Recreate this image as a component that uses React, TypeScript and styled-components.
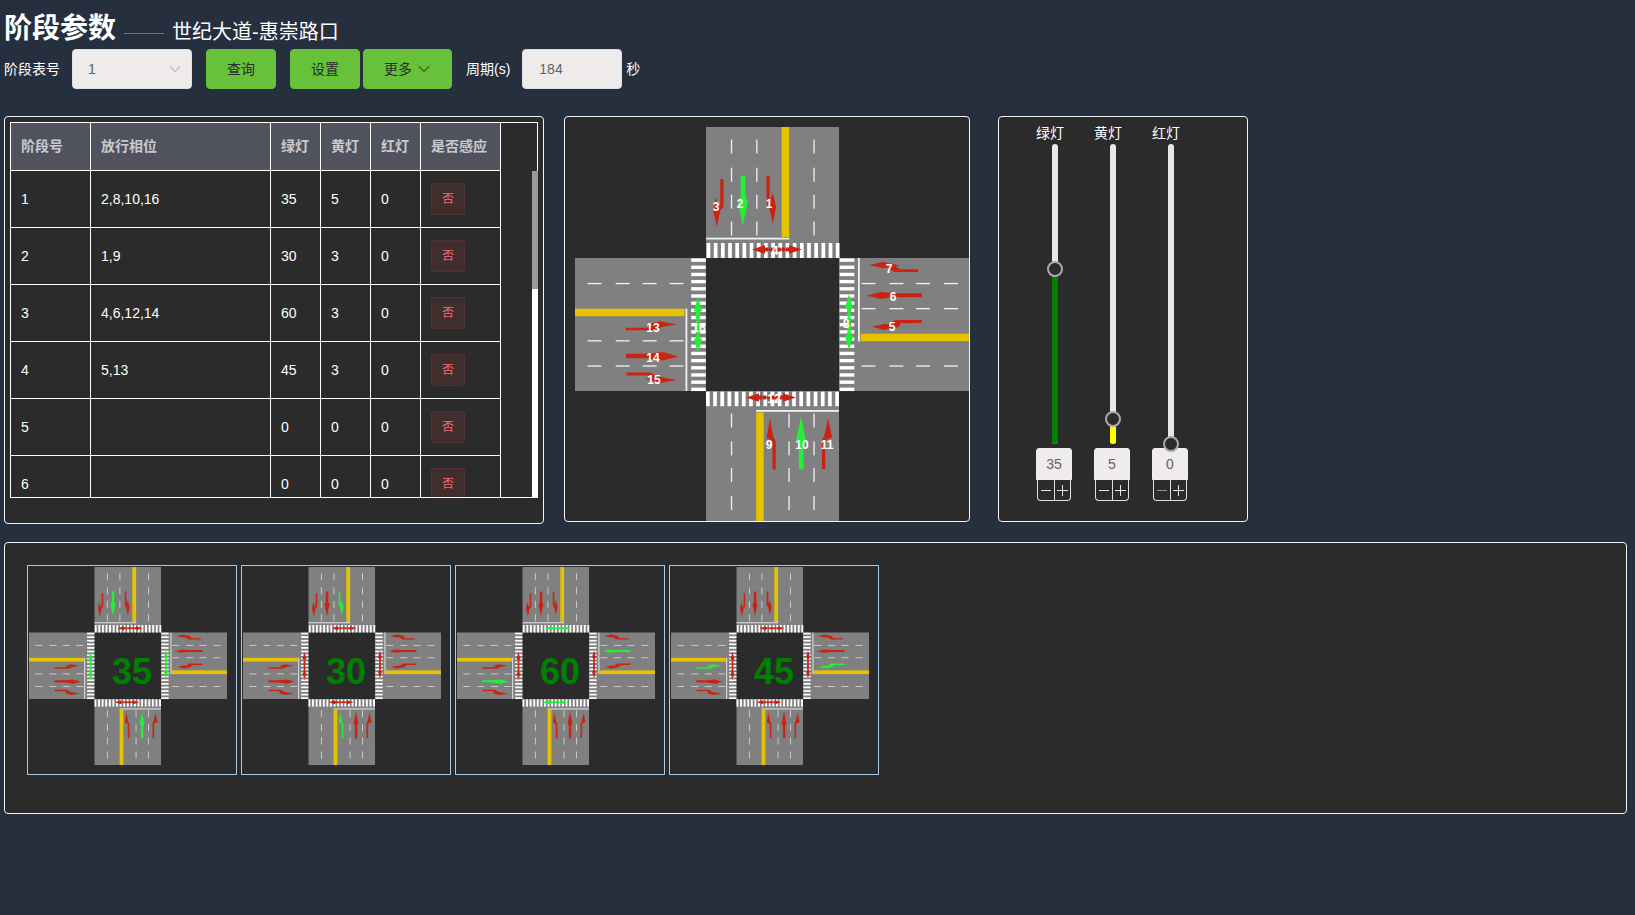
import React, { useState } from "react";
import styled, { createGlobalStyle } from "styled-components";

const GlobalStyle = createGlobalStyle`
  * { box-sizing: border-box; }
  body {
    margin: 0;
    background: #262f3e;
    color: #fff;
    font-family: "Liberation Sans", "Noto Sans CJK SC", sans-serif;
    font-size: 14px;
    line-height: 20px;
  }
  button, input, select { font: inherit; margin: 0; }
`;

const Page = styled.main`
  min-height: 100vh;
  padding: 0 8px 0 4px;
`;

const Header = styled.header`
  display: flex;
  align-items: center;
  height: 49px;
  padding-top: 8px;
`;

const Title = styled.h1`
  margin: 0;
  font-size: 28px;
  line-height: 40px;
  font-weight: 700;
`;

const Dash = styled.span`
  width: 40px;
  margin: 10px 8px 0;
  border-top: 1px solid #6d7480;
`;

const Subtitle = styled.h2`
  margin: 6px 0 0;
  font-size: 20px;
  line-height: 28px;
  font-weight: 400;
`;

const Toolbar = styled.form`
  display: flex;
  align-items: center;
  height: 40px;
  margin-bottom: 27px;
`;

const FieldLabel = styled.label<{ $before?: number }>`
  margin-left: ${(p) => p.$before ?? 0}px;
  margin-right: 12px;
`;

const SelectBox = styled.span`
  display: grid;
  width: 120px;
  align-items: center;
  margin-right: 14px;
  > * { grid-area: 1 / 1; }
  > svg { justify-self: end; margin-right: 10px; pointer-events: none; }
`;

const Select = styled.select`
  appearance: none;
  width: 100%;
  height: 40px;
  padding: 0 30px 0 15px;
  border: 1px solid #dcdfe6;
  border-radius: 4px;
  background: #efebeb;
  color: #606266;
`;

const CycleInput = styled.input`
  width: 100px;
  height: 40px;
  padding: 0 16px;
  border: 1px solid #dcdfe6;
  border-radius: 4px;
  background: #efebeb;
  color: #606266;
`;

const Unit = styled.span`
  margin-left: 4px;
`;

const GreenButton = styled.button<{ $after?: number }>`
  display: inline-flex;
  align-items: center;
  gap: 5px;
  height: 40px;
  margin-right: ${(p) => p.$after ?? 0}px;
  padding: 0 20px;
  border: 1px solid #67c23a;
  border-radius: 4px;
  background: #67c23a;
  color: #2b2b2b;
  cursor: pointer;
`;

const Panels = styled.div`
  display: flex;
  flex-wrap: wrap;
  align-items: flex-start;
  margin-bottom: 18px;
`;

const Panel = styled.section`
  border: 1px solid #f2f4f8;
  border-radius: 4px;
  background: #2b2b2b;
`;

const TablePanel = styled(Panel)`
  width: 540px;
  margin-right: 20px;
  padding: 5px 5px 25px;
`;

const CrossPanel = styled(Panel)`
  width: 406px;
  margin-right: 28px;
  > svg { display: block; width: 100%; border-radius: 3px; }
`;

const SliderPanel = styled(Panel)`
  display: flex;
  gap: 22px;
  width: 250px;
  height: 406px;
  padding: 6px 0 0 37px;
`;

const TableFrame = styled.div`
  position: relative;
`;

const TableScroller = styled.div`
  height: 376px;
  overflow-x: hidden;
  overflow-y: auto;
  scrollbar-width: none;
  border: 1px solid #fff;
`;

const ScrollTrack = styled.div`
  position: absolute;
  top: 49px;
  right: 0;
  bottom: 0;
  width: 6px;
  background: #fff;
`;

const ScrollThumb = styled.div`
  height: 36%;
  background: #9a9a9a;
`;

const Table = styled.table`
  width: 490px;
  table-layout: fixed;
  border-collapse: separate;
  border-spacing: 0;
`;

const Th = styled.th<{ $width: number }>`
  position: sticky;
  top: 0;
  z-index: 1;
  width: ${(p) => p.$width}px;
  height: 48px;
  padding: 0 10px 2px;
  border-right: 1px solid #fff;
  border-bottom: 1px solid #fff;
  background: #50525e;
  color: #c8cacf;
  text-align: left;
  white-space: nowrap;
`;

const Td = styled.td`
  height: 57px;
  padding: 0 10px;
  border-right: 1px solid #fff;
  border-bottom: 1px solid #fff;
`;

const Tag = styled.span`
  display: block;
  width: 34px;
  height: 32px;
  border: 1px solid #4e3233;
  border-radius: 2px;
  background: #402e2f;
  color: #f56c6c;
  font-size: 12px;
  line-height: 30px;
  text-align: center;
`;

const Column = styled.div`
  display: flex;
  flex-direction: column;
  align-items: flex-start;
  width: 36px;
`;

const ColumnLabel = styled.label`
  white-space: nowrap;
  margin-bottom: 1px;
`;

const SliderStack = styled.div`
  display: grid;
  place-items: center;
  width: 38px;
  height: 300px;
  margin-bottom: 4px;
  > * { grid-area: 1 / 1; }
`;

const Track = styled.span`
  display: flex;
  align-items: flex-end;
  width: 6px;
  height: 300px;
  border-radius: 3px;
  overflow: hidden;
  background: #e9e6ee;
`;

const Fill = styled.span<{ $color: string }>`
  width: 100%;
  background: ${(p) => p.$color};
`;

const Range = styled.input`
  appearance: none;
  z-index: 1;
  writing-mode: vertical-lr;
  direction: rtl;
  width: 16px;
  height: 316px;
  margin: -8px 0;
  background: transparent;
  &::-webkit-slider-thumb {
    appearance: none;
    width: 16px;
    height: 16px;
    border: 2px solid #a8a8ae;
    border-radius: 50%;
    background: #2b2b2b;
  }
`;

const SmallInput = styled.input`
  width: 36px;
  height: 32px;
  padding: 0;
  border: 1px solid #f2eff0;
  border-radius: 3px 3px 0 0;
  background: #f0ebec;
  color: #606266;
  text-align: center;
`;

const Steppers = styled.div`
  display: flex;
  width: 34px;
  height: 21px;
  margin-left: 1px;
  border: 1px solid #dcdfe6;
  border-top: 0;
  border-radius: 0 0 4px 4px;
`;

const StepButton = styled.button`
  display: flex;
  flex: 1;
  align-items: center;
  justify-content: center;
  padding: 0;
  border: 0;
  background: transparent;
  color: #e4e7ed;
  & + & { border-left: 1px solid #dcdfe6; }
  &:disabled { color: #8d8f94; }
`;

const PhasePanel = styled(Panel)`
  display: flex;
  flex-wrap: wrap;
  align-items: flex-start;
  gap: 4px;
  min-height: 272px;
  padding: 22px;
`;

const Thumb = styled.figure`
  width: 210px;
  height: 210px;
  margin: 0;
  border: 1px solid #a9c9e8;
  > svg { display: block; width: 100%; }
`;

const ChevronDown = ({ color }: { color: string }) => (
  <svg width="14" height="14" viewBox="0 0 14 14" fill="none" stroke={color} strokeWidth="1.1">
    <path d="M2 4.5 L7 9.5 L12 4.5" />
  </svg>
);

const RED = "#cb2212";
const GREEN = "#22f034";

const arrowPaths: Record<number, string> = {
  1: "M191.5 49h3.2v25l3-8 3.4 14-3.4 17-3-14.5-3.2-6.5z",
  2: "M165.7 49h4.8v21l2.5 5-5.3 23.5-4.6-23.5 2.6-5z",
  3: "M145.3 52h3.2v28l-3.2 3.2-3.4 16.5-3.9-16.5 2.6-13 3.2 9.8 1.5-1.5z",
  5: "M346.7 193v3l-21 .3-2 3.7-15 3-12-3.3 13-2.7 4.5 .5 5-4.2 5.5-.3z",
  6: "M291.7 168.7l14-3.8 13 1.3h28.3v4h-28.3l-13 1.5z",
  7: "M343.3 142.3v2.8h-24l-7-4.4-4.5 .5-13.5-3.2 13.7-3 17 3.4-4.5 1.1 5 2.8z",
  9: "M200.7 342.5h-3.2v-28.5l-6-3.3 3.6-19.5 3 18 2.6 5z",
  10: "M228.6 342.5h-4.8v-25l-2.7-4 5-24.5 4.8 24.5-2.3 4z",
  11: "M247 342h3.2v-28.5l6.8-3.3-3.8-19-3.4 15.5-2.8 7z",
  13: "M50.8 200.7h22l6-3-10 .6 16-4 16.9 3.1-15 2.6-7 3.3h-28.9z",
  14: "M50.8 226.7h21l16-1.7 15.5 4.4-15.5 4-16-2.2h-21z",
  15: "M51.5 245.5h24l8 4.3 18.2 3.2-16.7 3-15-4 6-1-4-2.5h-20.5z",
};

const labels: [number, number, number][] = [
  [3, 141, 84], [2, 165, 81], [1, 194, 81], [4, 200, 128],
  [7, 314, 146], [6, 318, 174], [5, 317, 204], [8, 271, 201],
  [13, 78, 205], [14, 78, 235], [15, 79, 257], [16, 124, 205],
  [9, 194, 322], [10, 227, 322], [11, 252, 322], [12, 199, 276],
];

// centre of each pedestrian crossing signal; the arrow is 50 long
const walks: { id: number; x: number; y: number; vertical?: boolean }[] = [
  { id: 4, x: 202, y: 122.5 },
  { id: 12, x: 196, y: 270.5 },
  { id: 16, x: 123, y: 198, vertical: true },
  { id: 8, x: 274, y: 195, vertical: true },
];

const dashA = [12.5, 40.7, 67.7, 94.5];
const dashB = [286.5, 314.4, 341, 369];
const stripes = Array.from({ length: 19 }, (_, i) => 131.6 + i * 7.18);

const VDashes = ({ xs, ys }: { xs: number[]; ys: number[] }) => (
  <>{xs.flatMap((x) => ys.map((y) => <rect key={`${x}-${y}`} x={x - 0.6} y={y} width={1.3} height={14} />))}</>
);
const HDashes = ({ xs, ys }: { xs: number[]; ys: number[] }) => (
  <>{ys.flatMap((y) => xs.map((x) => <rect key={`${x}-${y}`} x={x} y={y - 0.6} width={14} height={1.3} />))}</>
);

interface CrossProps {
  green: number[];
  viewBox: string;
  numbered?: boolean;
  seconds?: number;
}

function Crossroad({ green, viewBox, numbered, seconds }: CrossProps) {
  const tone = (id: number) => (green.includes(id) ? GREEN : RED);
  return (
    <svg viewBox={viewBox} role="img" aria-label="路口">
      <g fill="#808080">
        <rect x="131" y="0" width="133" height="131" />
        <rect x="131" y="264" width="133" height="132" />
        <rect x="0" y="131" width="131" height="133" />
        <rect x="264" y="131" width="132" height="133" />
      </g>
      <g fill="#e6c300">
        <rect x="206.7" y="0" width="7.5" height="110" />
        <rect x="0" y="181.7" width="109.5" height="7.5" />
        <rect x="285.7" y="206.7" width="110.3" height="7.5" />
        <rect x="181.2" y="285.5" width="7.5" height="110.5" />
      </g>
      <g fill="#f0f0f0">
        <VDashes xs={[156.5, 181.8, 239]} ys={dashA} />
        <VDashes xs={[156.5, 214, 239]} ys={dashB} />
        <HDashes xs={dashA} ys={[156.5, 213.8, 239]} />
        <HDashes xs={dashB} ys={[156.5, 181.6, 239]} />
        <rect x="131" y="110.7" width="83.3" height="1.8" />
        <rect x="110.5" y="181.5" width="1.8" height="82.5" />
        <rect x="283" y="131" width="1.8" height="83.6" />
        <rect x="181" y="283" width="83" height="1.8" />
      </g>
      <g fill="#fff">
        {stripes.map((s) => (
          <React.Fragment key={s}>
            <rect x={s} y="116" width="3.7" height="15" />
            <rect x={s - 0.6} y="264.7" width="3.7" height="14.5" />
            <rect x="116.2" y={s - 0.2} width="14.6" height="3.4" />
            <rect x="264.7" y={s - 0.2} width="14.6" height="3.4" />
          </React.Fragment>
        ))}
      </g>
      {walks.map((w) => (
        <g key={w.id} fill={tone(w.id)} transform={`translate(${w.x} ${w.y})${w.vertical ? " scale(1 1.12) rotate(90)" : ""}`}>
          <path d="M-25 0 L-12 -4.2 V-2 H-9 V2 H-12 V4.2z M25 0 L12 -4.2 V-2 H9 V2 H12 V4.2z" />
          <path d="M-8 -2h3.2v4h-3.2z M-3.8 -2h3.2v4h-3.2z M.6 -2h3.2v4H.6z M4.8 -2h3.2v4H4.8z" />
          <path d="M-12 -.8H12V.8H-12z" />
        </g>
      ))}
      {Object.entries(arrowPaths).map(([id, d]) => (
        <path key={id} d={d} fill={tone(Number(id))} />
      ))}
      {numbered && (
        <g fill="#fff" fontSize="12" fontWeight="700" textAnchor="middle">
          {labels.map(([id, x, y]) => (
            <text key={id} x={x} y={y}>{id}</text>
          ))}
        </g>
      )}
      {seconds !== undefined && (
        <text x="166" y="234" fontSize="72" fontWeight="700" fill="#008000">{seconds}</text>
      )}
    </svg>
  );
}

const columns: [string, number][] = [
  ["阶段号", 80], ["放行相位", 180], ["绿灯", 50], ["黄灯", 50], ["红灯", 50], ["是否感应", 80],
];

const stages = [
  { id: 1, phases: [2, 8, 10, 16], green: 35, yellow: 5, red: 0 },
  { id: 2, phases: [1, 9], green: 30, yellow: 3, red: 0 },
  { id: 3, phases: [4, 6, 12, 14], green: 60, yellow: 3, red: 0 },
  { id: 4, phases: [5, 13], green: 45, yellow: 3, red: 0 },
  { id: 5, phases: [], green: 0, yellow: 0, red: 0 },
  { id: 6, phases: [], green: 0, yellow: 0, red: 0 },
];

function LampSlider({ id, label, color, initial }: { id: string; label: string; color: string; initial: number }) {
  const [value, setValue] = useState(initial);
  const clamp = (n: number) => setValue(Math.max(0, Math.min(60, n || 0)));
  return (
    <Column>
      <ColumnLabel htmlFor={id}>{label}</ColumnLabel>
      <SliderStack>
        <Track>
          <Fill $color={color} style={{ height: `${(value / 60) * 100}%` }} />
        </Track>
        <Range id={id} type="range" min={0} max={60} value={value} onChange={(e) => clamp(Number(e.target.value))} />
      </SliderStack>
      <SmallInput aria-label={`${label}秒数`} value={value} onChange={(e) => clamp(Number(e.target.value))} />
      <Steppers>
        <StepButton type="button" aria-label={`${label}减少`} disabled={value === 0} onClick={() => clamp(value - 1)}>
          <svg width="12" height="12" viewBox="0 0 12 12" stroke="currentColor"><path d="M1 6.5H11" /></svg>
        </StepButton>
        <StepButton type="button" aria-label={`${label}增加`} onClick={() => clamp(value + 1)}>
          <svg width="12" height="12" viewBox="0 0 12 12" stroke="currentColor"><path d="M1 6.5H12M6.5 1V12" /></svg>
        </StepButton>
      </Steppers>
    </Column>
  );
}

export default function App() {
  return (
    <Page>
      <GlobalStyle />
      <Header>
        <Title>阶段参数</Title>
        <Dash />
        <Subtitle>世纪大道-惠崇路口</Subtitle>
      </Header>
      <Toolbar onSubmit={(e) => e.preventDefault()}>
        <FieldLabel htmlFor="stage-table">阶段表号</FieldLabel>
        <SelectBox>
          <Select id="stage-table" defaultValue="1">
            <option>1</option>
            <option>2</option>
            <option>3</option>
          </Select>
          <ChevronDown color="#b8bcc6" />
        </SelectBox>
        <GreenButton type="submit" $after={14}>查询</GreenButton>
        <GreenButton type="button" $after={3}>设置</GreenButton>
        <GreenButton type="button">
          更多
          <ChevronDown color="#35581f" />
        </GreenButton>
        <FieldLabel htmlFor="cycle" $before={14}>周期(s)</FieldLabel>
        <CycleInput id="cycle" defaultValue="184" />
        <Unit>秒</Unit>
      </Toolbar>

      <Panels>
        <TablePanel>
          <TableFrame>
            <TableScroller>
              <Table>
                <thead>
                  <tr>
                    {columns.map(([name, width]) => (
                      <Th key={name} $width={width} scope="col">{name}</Th>
                    ))}
                  </tr>
                </thead>
                <tbody>
                  {stages.map((s) => (
                    <tr key={s.id}>
                      <Td>{s.id}</Td>
                      <Td>{s.phases.join(",")}</Td>
                      <Td>{s.green}</Td>
                      <Td>{s.yellow}</Td>
                      <Td>{s.red}</Td>
                      <Td><Tag>否</Tag></Td>
                    </tr>
                  ))}
                </tbody>
              </Table>
            </TableScroller>
            <ScrollTrack>
              <ScrollThumb />
            </ScrollTrack>
          </TableFrame>
        </TablePanel>

        <CrossPanel>
          <Crossroad green={stages[0].phases} viewBox="-10 -10 404 404" numbered />
        </CrossPanel>

        <SliderPanel>
          <LampSlider id="green" label="绿灯" color="#008000" initial={35} />
          <LampSlider id="yellow" label="黄灯" color="#ffff00" initial={5} />
          <LampSlider id="red" label="红灯" color="#ff0000" initial={0} />
        </SliderPanel>
      </Panels>

      <PhasePanel>
        {stages.slice(0, 4).map((s) => (
          <Thumb key={s.id}>
            <Crossroad green={s.phases} viewBox="-2 -2 416 416" seconds={s.green} />
          </Thumb>
        ))}
      </PhasePanel>
    </Page>
  );
}
